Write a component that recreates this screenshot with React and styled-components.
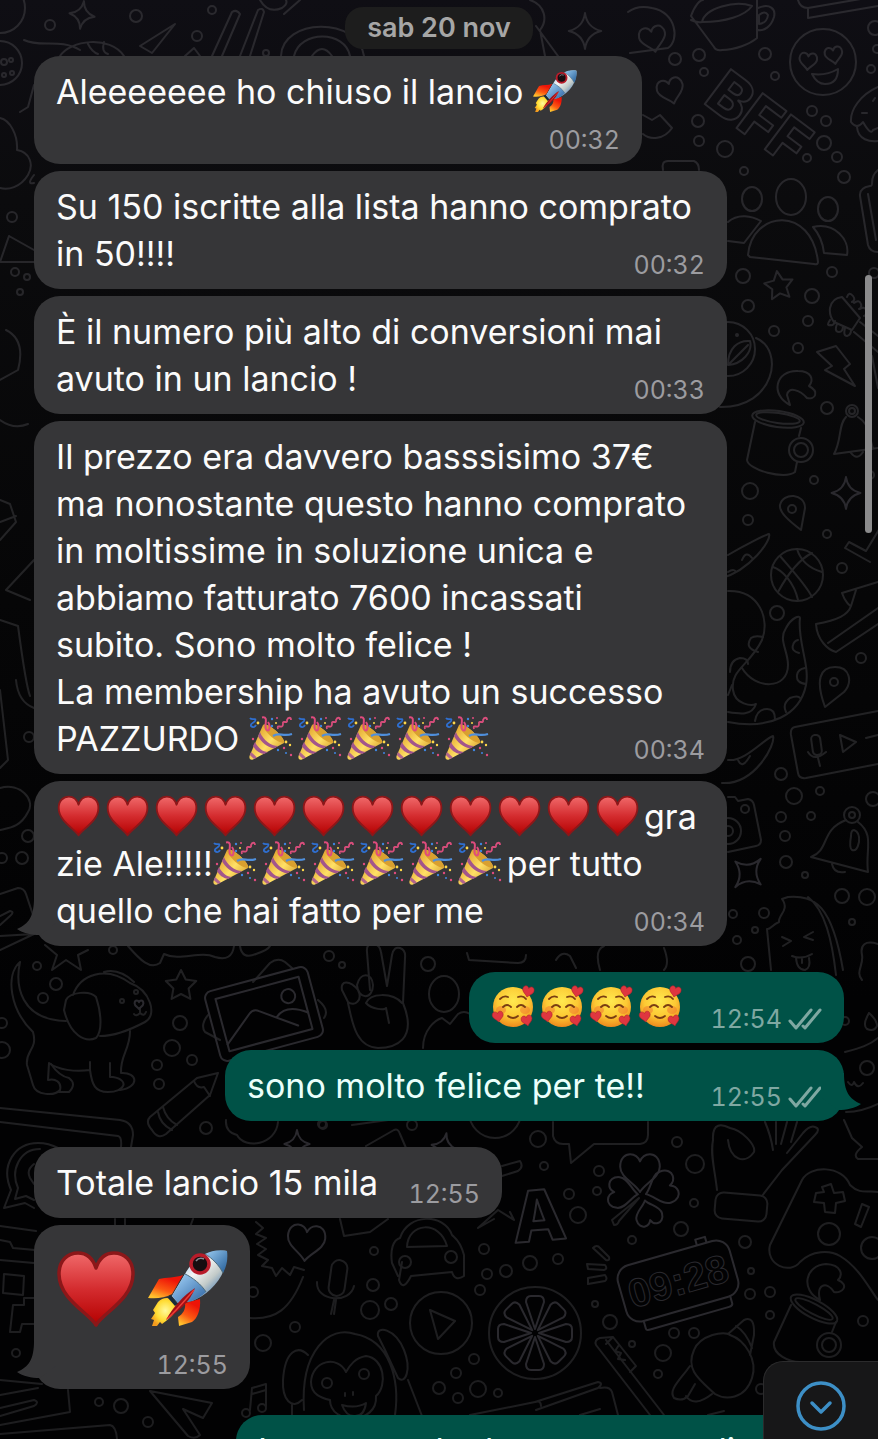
import React from 'react';
import styled, { createGlobalStyle, css } from 'styled-components';

const GlobalStyle = createGlobalStyle`
  * {
    box-sizing: border-box;
  }
  body {
    margin: 0;
    background: #020203;
    font-family: Inter, "Liberation Sans", sans-serif;
  }
`;

const Screen = styled.main`
  position: relative;
  height: 100vh;
  overflow: hidden;
  background: linear-gradient(#0f0e14 0, #0b0b0d 200px, #060607 600px, #020203 1000px);
`;

const Wallpaper = styled.svg`
  position: absolute;
  inset: 0;
  width: 100%;
  height: 100%;
  fill: none;
  stroke-width: 2;
  stroke-linecap: round;
  stroke-linejoin: round;
`;

const Thread = styled.div`
  position: relative;
  display: flex;
  flex-direction: column;
  gap: 26px;
  padding: 7px 34px 0;
`;

const DatePill = styled.time`
  align-self: center;
  height: 42px;
  margin-bottom: -19px;
  padding: 0 22px;
  border-radius: 18px;
  background: #1d1d1d;
  color: #a6a6a6;
  font-size: 27px;
  font-weight: 600;
  line-height: 42px;
`;

const Group = styled.section`
  display: flex;
  flex-direction: column;
  align-items: ${({ $mine }) => ($mine ? 'flex-end' : 'flex-start')};
  gap: 7px;
`;

const Bubble = styled.article`
  position: relative;
  display: grid;
  grid-template-columns: ${({ $time }) => ($time === 'beside' ? 'auto auto' : '1fr')};
  justify-content: space-between;
  column-gap: 16px;
  width: ${({ $width }) => ($width ? `${$width}px` : 'fit-content')};
  max-width: 100%;
  padding: 12px 22px;
  border-radius: 26px;
  background: ${({ $mine }) => ($mine ? '#005247' : '#363638')};
  color: ${({ $mine }) => ($mine ? '#eafffb' : '#fbfbfb')};
`;

const Text = styled.p`
  grid-row: 1;
  grid-column: 1;
  margin: 0;
  font-size: 34px;
  line-height: 47px;
  white-space: pre;
`;

const Line = styled.span`
  display: block;
  width: fit-content;
  height: 47px;
`;

const Meta = styled.span`
  display: flex;
  align-items: center;
  gap: 6px;
  align-self: end;
  justify-self: end;
  height: 32px;
  margin-bottom: -4px;
  color: ${({ $mine }) => ($mine ? '#7fa8a2' : '#9c9ca0')};
  font-size: 25px;
  font-variant-numeric: tabular-nums;
  line-height: 32px;
  ${({ $time }) => $time === 'over' && css`
    grid-row: 1;
    grid-column: 1;
  `}
  ${({ $time }) => $time === 'below' && css`
    margin-top: 9px;
  `}
`;

const TailShape = styled.svg`
  position: absolute;
  bottom: 0;
  width: 40px;
  height: 48px;
  fill: ${({ $mine }) => ($mine ? '#005247' : '#363638')};
  ${({ $mine }) => ($mine ? 'right: -17px; transform: scaleX(-1);' : 'left: -17px;')}
`;

const Inline = styled.svg`
  width: 44px;
  height: 44px;
  margin-right: 5px;
  vertical-align: -9px;
`;

const BigEmojis = styled.div`
  display: flex;
  gap: 12px;
  padding: 12px 0 13px;
`;

const Big = styled.svg`
  width: 80px;
  height: 78px;
`;

const ScrollThumb = styled.div`
  position: absolute;
  top: 275px;
  right: 6px;
  width: 7px;
  height: 258px;
  border-radius: 4px;
  background: #8b8b8c;
`;

const ScrollDown = styled.button`
  position: absolute;
  right: 0;
  bottom: 0;
  display: flex;
  align-items: center;
  justify-content: center;
  width: 115px;
  height: 78px;
  padding: 10px 0 0;
  border: 1px solid #2b2b2c;
  border-width: 1px 0 0 1px;
  border-radius: 20px 0 0 0;
  background: #171718;
`;

const HiddenDefs = styled.svg`
  position: absolute;
  width: 0;
  height: 0;
`;

const HEART = 'M0 10C-3 5-11 2-11-4C-11-9-8-11-5.500-11C-2.500-11-.8-9 0-7C.8-9 2.500-11 5.500-11C8-11 11-9 11-4C11 2 3 5 0 10Z';

/* ---------- emoji drawings ---------- */

const EmojiDefs = () => (
  <HiddenDefs aria-hidden="true">
    <defs>
      <linearGradient id="heartRed" x1="0" y1="0" x2="0" y2="1">
        <stop offset="0" stopColor="#f0696a" />
        <stop offset=".5" stopColor="#d42c2f" />
        <stop offset="1" stopColor="#b40000" />
      </linearGradient>
      <linearGradient id="cone" x1="0" y1=".2" x2="1" y2="1">
        <stop offset=".1" stopColor="#e0a12c" />
        <stop offset=".5" stopColor="#ffe066" />
        <stop offset="1" stopColor="#c98a1c" />
      </linearGradient>
      <radialGradient id="face" cx=".5" cy=".35" r=".65">
        <stop offset="0" stopColor="#ffe94f" />
        <stop offset=".6" stopColor="#fcc934" />
        <stop offset="1" stopColor="#ee8a1c" />
      </radialGradient>
      <linearGradient id="hull" x1="0" y1="0" x2="1" y2="1">
        <stop offset=".1" stopColor="#7db4e6" />
        <stop offset=".42" stopColor="#f4f6f5" />
        <stop offset=".62" stopColor="#c3cbc9" />
        <stop offset=".85" stopColor="#3f78b4" />
      </linearGradient>
      <linearGradient id="base" x1="0" y1="0" x2="1" y2="1">
        <stop offset=".2" stopColor="#8fc0ea" />
        <stop offset="1" stopColor="#2c62a0" />
      </linearGradient>
      <linearGradient id="nose" x1="0" y1="0" x2="1" y2="1">
        <stop offset="0" stopColor="#9ccdf2" />
        <stop offset="1" stopColor="#235c96" />
      </linearGradient>
      <linearGradient id="fin" x1=".8" y1="0" x2=".3" y2="1">
        <stop offset=".2" stopColor="#ee1408" />
        <stop offset=".65" stopColor="#fb5a12" />
        <stop offset="1" stopColor="#ffc22e" />
      </linearGradient>
      <radialGradient id="flame" cx=".55" cy=".45" r=".6">
        <stop offset="0" stopColor="#fffa9c" />
        <stop offset=".6" stopColor="#ffdc33" />
        <stop offset="1" stopColor="#f39a1d" />
      </radialGradient>
    </defs>
  </HiddenDefs>
);

const HeartArt = () => (
  <path
    d="M39 74C32 62 2 48 2 23C2 9 11 2 21 2C30 2 36 8 39 17C42 8 48 2 57 2C67 2 76 9 76 23C76 48 46 62 39 74Z"
    fill="url(#heartRed)"
    stroke="#8c1719"
    strokeWidth="3.500"
    strokeLinejoin="round"
  />
);

const RocketArt = () => (
  <>
    <path d="M0 48L11 29C18 27 28 28 35 25L24 44C17 48 8 49 0 48Z" fill="url(#fin)" />
    <path d="M37 53L52 49C53 60 49 69 44 72L31 76L30 67C35 64 38 59 37 53Z" fill="url(#fin)" />
    <path d="M4 76L6 70L3 69L7 63L5 60L10 52C15 47 22 46 29 53C30 60 25 66 18 71L14 74L12 72L9 76Z" fill="url(#flame)" />
    <path d="M79 1C60-1 44 10 37 24L24 46L30 53L44 51C62 44 80 26 79 1Z" fill="url(#hull)" />
    <path d="M37 24L24 46L30 53L44 51C49 49 54 46 58 42C54 35 44 27 37 24Z" fill="url(#base)" />
    <path d="M79 1C71-1 63 1 57 4C64 8 71 15 75 23C79 16 80 8 79 1Z" fill="url(#nose)" />
    <path d="M57 4C64 8 71 15 75 23M37 24C44 27 54 35 58 42" stroke="#4f6d7d" fill="none" />
    <circle cx="52" cy="14" r="9" fill="#160d10" stroke="#b81c2a" strokeWidth="3.500" />
    <path d="M48 11q3-4 8-2" stroke="#8a8a94" strokeWidth="1.500" fill="none" />
    <path d="M22 45L30 54L27 56L20 48Z" fill="#172b3b" />
    <path d="M47 38C36 45 24 58 18 70C30 62 42 52 47 38Z" fill="#9f0f16" />
    <path d="M46 40C38 49 28 61 19 69" stroke="#ef3d35" strokeWidth="1.500" fill="none" />
  </>
);

const Heart = () => <Inline viewBox="-3 -3 82 82" role="img" aria-label="cuore"><HeartArt /></Inline>;

const Rocket = () => <Inline viewBox="0 -2 80 80" role="img" aria-label="razzo"><RocketArt /></Inline>;

const Party = () => (
  <Inline viewBox="0 0 44 44" role="img" aria-label="festa">
    <path d="M.5 40L14 9C18 5 37 22 35 27L4 43.500C1 44.500 0 42 .5 40Z" fill="url(#cone)" />
    <path d="M14 9C18 5 37 22 35 27C28 27 15 16 14 9Z" fill="#d9a02f" />
    <path d="M11 16C14 24 22 30 29 30L25 32.500C18 31 12 26 9 20Z" fill="#a2558c" />
    <path d="M6 26C9 32 14 36 19 36L15 38C10 37 6 34 4 30Z" fill="#a2558c" />
    <path d="M2 36L8 41.500L5 43L.8 39Z" fill="#b0648d" />
    <path d="M13 1.500C20 0 15 9 17 13C20 18 22 10 19 6" stroke="#e04b7e" strokeWidth="2" fill="none" />
    <path d="M24 20C30 16 34 21 43 18" stroke="#4f8fdc" strokeWidth="2.200" fill="none" />
    <path d="M1 2C3 5 8 1 6 5C4 8 1 7 2 10C4 12 6 11 7 9" stroke="#2f6fd0" strokeWidth="1.800" fill="none" />
    <path d="M29 13C27 7 34 14 34 8C33 3 39 9 38 4C39 1 42 1 42 4" stroke="#d94e7c" strokeWidth="1.800" fill="none" />
    <g fill="#ffd84a"><circle cx="9" cy="7" r="1.400" /><circle cx="37" cy="26" r="1.400" /><circle cx="41" cy="29" r="1.200" /><circle cx="27" cy="7" r="1" /></g>
    <g fill="#e04b7e"><circle cx="35" cy="32" r="1.200" /><circle cx="42" cy="39" r="1.200" /><circle cx="4" cy="23" r="1.200" /><circle cx="28" cy="2" r="1" /></g>
    <g fill="#3f86e0"><circle cx="23" cy="3" r="1.200" /><circle cx="23" cy="10" r="1.200" /><circle cx="29" cy="34" r="1.200" /><circle cx="37" cy="37" r="1" /></g>
  </Inline>
);

const Loved = () => (
  <Inline viewBox="-1 0 44 44" role="img" aria-label="faccina innamorata">
    <circle cx="21" cy="22" r="20" fill="url(#face)" />
    <ellipse cx="9" cy="25" rx="5" ry="4" fill="#ef6a2e" opacity=".45" />
    <ellipse cx="33" cy="25" rx="5" ry="4" fill="#ef6a2e" opacity=".45" />
    <g fill="none" stroke="#7a3d12" strokeWidth="1.800" strokeLinecap="round">
      <path d="M8 14q4-4 8-2M26 12q5-2 8 2M11 22q4-4 8 0M25 22q4-4 8 0M16 31q5 4 10 0" />
    </g>
    <g fill="#df3640" stroke="#a9202b" strokeWidth="1">
      <path d={HEART} transform="translate(36 7) rotate(12) scale(.52)" />
      <path d={HEART} transform="translate(6 32) rotate(-8) scale(.5)" />
      <path d={HEART} transform="translate(35 36) rotate(-12) scale(.5)" />
    </g>
  </Inline>
);

const repeat = (Emoji, count) => Array.from({ length: count }, (_, i) => <Emoji key={i} />);

/* ---------- doodle wallpaper ---------- */

const dots = [
  [675, 59, 6], [699, 55, 6], [704, 72, 4], [765, 54, 6], [775, 76, 4], [812, 111, 5], [826, 121, 5], [824, 143, 7],
  [807, 158, 4], [837, 157, 5], [844, 177, 6], [698, 121, 6], [699, 141, 5], [725, 149, 8], [744, 171, 4], [875, 28, 7],
  [871, 69, 4], [877, 49, 4], [50, 25, 5], [136, 16, 6], [212, 10, 4], [197, 36, 5], [266, 53, 3], [12, 217, 5],
  [15, 272, 4], [27, 277, 3], [20, 292, 3], [743, 276, 7], [832, 272, 5], [812, 296, 7], [748, 306, 6], [808, 321, 5],
  [774, 331, 5], [798, 348, 5], [827, 408, 6], [814, 480, 4], [750, 491, 8], [748, 520, 5], [827, 534, 4], [842, 568, 5],
  [874, 273, 5], [870, 475, 4], [777, 613, 7], [861, 658, 5], [781, 774, 6], [794, 796, 8], [820, 791, 4], [781, 817, 5],
  [811, 816, 4], [785, 836, 5], [786, 862, 6], [805, 875, 3], [842, 896, 7], [867, 897, 8], [852, 922, 3], [873, 799, 7],
  [733, 914, 4], [764, 913, 5], [755, 930, 3], [737, 940, 4], [748, 964, 7], [37, 966, 4], [56, 984, 6], [43, 998, 5],
  [113, 950, 4], [180, 1023, 7], [172, 1048, 8], [157, 1065, 5], [192, 1060, 5], [159, 1084, 5], [206, 1128, 6],
  [329, 956, 5], [342, 965, 3], [428, 964, 7], [322, 1124, 4], [412, 1125, 5], [2, 1023, 5], [2, 1050, 8], [29, 737, 5],
  [28, 836, 6], [22, 858, 6], [2, 858, 5], [16, 1353, 4], [99, 1402, 4], [121, 1406, 7], [148, 1422, 5], [263, 1343, 8],
  [253, 1292, 5], [538, 1139, 8], [677, 1142, 5], [544, 1166, 4], [599, 1171, 5], [597, 1191, 4], [569, 1194, 5],
  [578, 1215, 8], [695, 1164, 9], [694, 1203, 4], [681, 1229, 7], [632, 1240, 4], [745, 1242, 6], [751, 1271, 3],
  [750, 1294, 5], [770, 1292, 5], [770, 1315, 4], [863, 1321, 5], [484, 1249, 5], [558, 1259, 5], [530, 1263, 7],
  [506, 1271, 6], [487, 1274, 5], [480, 1290, 5], [373, 1285, 6], [391, 1304, 6], [370, 1310, 9], [295, 1327, 5],
  [374, 1251, 4], [474, 1359, 5], [456, 1373, 5], [439, 1388, 6], [458, 1398, 5], [478, 1389, 8], [498, 1393, 4],
  [595, 1304, 3], [610, 1322, 7], [674, 1333, 5], [694, 1333, 5], [632, 1344, 3], [663, 1353, 8], [658, 1374, 4],
  [323, 1125, 4], [761, 1389, 5], [845, 1021, 4], [867, 1068, 7],
  // cookie, eyes, lenses, handles
  [0, 63, 22], [4, 62, 3], [11, 60, 2], [4, 75, 2], [12, 73, 2], [0, 8, 25], [823, 62, 33], [728, 349, 27], [737, 335, 1],
  [801, 450, 7], [801, 450, 12], [852, 411, 6], [852, 411, 3], [792, 509, 4], [797, 575, 26], [834, 682, 4], [728, 831, 13],
  [728, 831, 5], [745, 809, 4], [852, 815, 8], [852, 815, 3], [122, 1001, 2], [136, 992, 2], [405, 1262, 6], [451, 1257, 6],
  [441, 1323, 31], [535, 1333, 46], [829, 1234, 11], [872, 1248, 11], [829, 1345, 7], [829, 1345, 12], [246, 1413, 4],
  [262, 1408, 4], [327, 1383, 5], [364, 1374, 5], [495, 1112, 26],
];

const strokes = [
  // cup and bread
  'M691 16C695 5 700 0 703 0M691 16L714 47Q716 51 722 50C735 50 750 44 757 38V0M691 20C697 23 702 22 702 22C705 8 735 0 752 6C745 16 725 22 702 22M758 8C770 3 776 9 774 17C771 27 764 31 758 30M759 15q6-5 9 0q-1 8-9 9z',
  'M798 0Q800 8 808 8L878-4M808 8V18L878 6',
  'M630 53L668 48C680 40 676 12 652 8C640 5 632 9 628 12',
  'M812 74q14 2 26-5q0 15-13 15q-8 0-13-10z',
  'M878 87C860 95 850 110 851 122q6 8 12 0q8 14 10 8l5-2M857 127C858 140 870 142 878 141M862 113h5M873 101l2-3',
  'M643 115L652 120L660 115L672 128C664 140 650 140 643 134M663 170q-2-9 5-9h26q5 2 5 9',
  // top strip
  'M24 40C40 48 60 38 80 50M60 56C70 40 110 35 124 56M88 44q4 8 10 10M104 42q-3 10 4 12M175 24L140 46L152 53ZM185 56L194 48L200 56',
  'M212 56L232 12q5-3 8 2L222 56M240 56L258 10q5-3 6 2L250 56',
  'M281 56C282 18 358 16 364 56M294 56C300 30 345 30 350 56M312 56q10-14 20 0M300 0L284 14M260 0q8 14 22 8q6-4 4-8M530 0C545 5 548 20 540 30L545 56M536 26L558 56',
  // left margin
  'M0 118C10 120 18 135 17 150C30 152 34 165 28 175C20 188 8 190 0 188M20 112l8-5l6-22M34 175q-8 10 0 8M9 236L0 262H34M9 236L34 250M0 500l10 4l6 18l-16 18M0 522L16 516M0 620l18 6q8 60 12 70M0 690L8 760L0 768M16 680q2 22 18 28',
  'M0 788C20 782 36 800 28 812C20 828 8 828 0 830M0 894L18 888Q24 888 26 894L34 918M0 916l10-5q5 1 0 5L0 925M0 936L34 934L0 950M34 560L6 590L30 600M6 330q20 10 12 40L0 380M0 420q14 10 28 4',
  // people
  'M748 255C752 210 812 205 818 262Q818 265 814 264L750 257zM728 222C738 213 752 216 761 221L744 243L728 241M813 227C835 222 850 240 847 255L824 253C823 243 820 235 813 227',
  'M878 170C868 178 875 186 870 186Q859 188 860 196L868 245Q870 252 878 252M868 194L876 240',
  // guitar, bolt, duck, smoke
  'M830 308q2-10 12-11L860 318L852 330L834 322Q829 316 830 308M847 297q2-6 6-1q3 4-1 6M854 303q5-4 7 1q1 4-2 5M860 309q5-3 7 2q0 4-3 5M830 320q-4 6 0 5q4 1 5-4M837 324q-3 8 2 8q4 0 4-6M845 328q-2 8 2 8q4-1 4-6M860 322L878 336M854 332L878 352M872 356l6 32',
  'M817 352L836 346L850 364L844 369L855 386L825 370L832 366Z',
  'M756 338C785 350 775 408 720 407M728 365C728 348 738 340 750 341C753 352 742 364 728 365L748 345',
  'M790 405C770 395 775 370 798 371C812 371 814 380 809 386C820 392 815 400 807 398C800 390 788 386 787 395Z',
  // mug, bell, pin
  'M755 422L747 460C748 470 785 480 795 472L797 462M801 428L799 436M846 417C838 425 842 440 834 454L878 448M858 417q10 6 12 20l3 12M851 453q6 8 12-1',
  'M801 530C788 520 779 512 780 505C783 492 805 493 805 508ZM728 555C745 545 765 535 769 534C772 540 750 570 722 578M742 560q4-10 10-2M728 572q6-4 8 0',
  'M780 556C792 570 806 585 812 597M773 567C782 570 794 582 798 600M797 549C802 565 815 570 822 572M778 592C790 570 802 558 812 553M845 548l4-6L866 551L880 528M845 548L870 562',
  // shoe, octopus
  'M842 593L878 582M842 593C845 602 850 606 851 606C848 615 838 620 816 624C817 640 828 650 836 652L878 624M828 643L878 608M851 606L856 590',
  'M728 591C760 590 770 620 762 640C750 665 730 670 733 690C735 705 752 706 756 704C752 716 740 714 728 712M742 668C755 690 788 690 788 665C788 650 778 640 786 628C792 617 800 615 800 618C797 640 810 665 806 685C800 715 770 730 728 722',
  'M758 652q-14-4-7-14q4-3 12-1M730 672q0-12 10-14q8 0 8 6M728 695l4-10M755 721q2-12 12-12q8 0 8 10M786 712q-4-8 4-14q8-3 10 0M806 684q-10-1-9-9q1-6 8-7M799 653q-8-2-6-8q1-4 5-5',
  'M825 707C815 680 820 667 835 667C850 667 853 682 844 692ZM878 711L795 727Q790 728 791 735L798 773Q799 779 806 778L878 764M840 735L856 742L843 752ZM866 738L878 735M808 752q6 10 18 0M818 758l2 8',
  'M728 760C745 762 765 738 773 736C776 744 755 785 722 783M738 760q4 10 12-4M728 797L735 797L738 801L748 799Q753 800 754 805L761 840Q761 845 756 846L728 852',
  // second bell, lolly
  'M846 820C820 830 830 850 811 857L868 872C865 850 875 835 858 822M854 830q6 2 5 12q-2 10-7 8q-3-2-1-14q0-6 3-6M832 864q2 10 13 8',
  'M782 899L788 897C815 895 832 905 843 970M782 899C790 910 778 915 779 922C772 925 770 930 767 929L771 970M808 897C825 910 832 940 836 975M782 937l9 4l-8 5M813 932l-9 5l9 3M792 956q10 4 20-2M796 958q1 12 9 12q6-2 4-12M802 958v5',
  'M878 944C865 940 860 945 862 955C864 965 855 972 862 980M845 1052C860 1048 870 1045 878 1038M846 1112C858 1112 870 1108 878 1104M869 1013q-7 12-2 16q7 3 10-3q0-6-8-13M844 1120L852 1138L862 1147q-10 8-4 12h20M848 1082q4 6 6 0q4 8 9 1',
  // puppy
  'M20 962C5 975 10 1010 33 1032C38 1050 25 1050 27 1065L33 1085C36 1096 55 1096 60 1090C62 1082 55 1078 48 1080L49 1063C58 1070 75 1072 90 1070C92 1085 95 1092 108 1092C125 1092 130 1080 113 1077H110V1063M90 1062V1070M20 962C15 985 20 1020 66 1021',
  'M51 1064q8 12 18 14q8 6 0 14h-10M130 1031C130 1050 120 1055 121 1073C138 1072 140 1087 120 1090',
  'M66 1000C70 992 90 990 96 997C102 1015 102 1032 96 1038C85 1043 70 1035 64 1010ZM73 995C80 975 105 965 130 983C150 990 158 1015 145 1022C130 1030 115 1036 100 1036M104 972q15-4 30 10M140 1008v5q-4 4-6 1M140 1013q4 4 6-1',
  'M45 945L57 955L52 970L66 960L81 970L78 955L88 950M128 946C140 960 150 970 160 963L164 954C180 962 200 950 215 957Q232 962 234 946M240 946q2 14 16 8q12-4 14-8',
  'M253 982L270 963Q278 957 285 962L292 968M318 1000Q330 1010 324 1018M208 1015Q200 1025 205 1032L220 1040',
  // hand, person, pencil
  'M370 990L367 952Q366 943 374 944Q380 945 381 952L387 986L392 955Q394 946 400 948Q406 950 405 958L403 1003C418 1040 395 1048 378 1048C355 1047 352 1020 348 1003M342 990C340 980 350 980 358 990C363 1000 355 1007 348 1002ZM357 985C360 972 372 972 373 985C373 1000 358 1000 357 985M366 1003C370 993 392 992 402 1003M366 1003C372 1010 385 1010 386 1008L389 1023',
  'M423 1048C423 1030 435 1020 442 1018L450 1024L458 1014q6-4 12 0M218 1073L197 1078L150 1117Q145 1122 152 1130Q158 1140 166 1134L210 1095ZM158 1112q2 12 14 18M163 1107q3 12 14 18M194 1081q3 8 10 6l6 9',
  'M226 1120Q225 1132 237 1135C245 1150 276 1145 278 1122M352 1125l36-5M366 1146L394 1130Q398 1128 400 1134L406 1148M467 953L469 960L518 963q8 0 8-8M556 960q6-10 14-4l6 12M600 970q-6-20 4-24M664 948q6 16 0 22',
  // phone and speech mark
  'M0 1108L120 1120Q133 1122 133 1135L131 1147M0 1122L118 1136Q122 1137 121 1147M34 1208L25 1203L4 1208L11 1190C0 1165 15 1143 38 1143C50 1143 56 1147 60 1149M34 1200L26 1196L15 1199L18 1188C10 1170 20 1149 40 1149M34 1164q-8 6-4 14l4 6',
  'M0 1226L36 1231M0 1240l10 2l3 6l22 2M0 1260L34 1263M4 1274l20 2l-1 19l-20-2zM34 1298H24V1305H13L10 1332H20L22 1324H34M115 1219v8M125 1219v8M193 1219l-3 8',
  'M0 1380L42 1384M0 1395L38 1388M0 1408L34 1400q6 2 0 6L0 1416M68 1390L70 1412L0 1425M0 1434L110 1425Q116 1426 117 1439M150 1391L212 1403L203 1418L183 1409L200 1435Q195 1440 188 1436ZM250 1410L252 1388L266 1384V1406M252 1394L266 1390',
  // dinosaur and monkey
  'M256 1222l7 6l-7 6l10 4l-9 6l9 5l-8 6l10 5l-6 6l10 2l4 8l6-8l8 7l4-8l10 3M303 1277C290 1310 275 1320 250 1318',
  'M304 1410C300 1350 330 1325 355 1334C390 1340 400 1380 395 1415M308 1355C298 1345 285 1350 283 1380C282 1400 292 1410 302 1400M378 1336C376 1325 395 1328 404 1350C412 1370 405 1385 398 1378L385 1350ZM346 1372C338 1355 312 1360 311 1382C311 1395 322 1398 330 1400C330 1425 378 1425 376 1396C388 1385 384 1358 366 1356C355 1358 350 1365 346 1372M342 1405q14 4 24-2q-2 14-12 13q-8 0-12-11M345 1393v3M353 1392v3M292 1405v12M408 1380l14 36',
  // car, play, mic
  'M402 1262L399 1280q4 12 12-4L452 1272q3 10 12 4L464 1255C460 1240 455 1238 452 1235C444 1213 408 1213 400 1238C393 1240 390 1250 392 1263L398 1276M407 1247C408 1222 440 1220 447 1246ZM430 1310L455 1321L438 1339Z',
  'M317 1282C316 1302 350 1304 354 1286M334 1300L331 1314M336 1300L334 1314M340 1219L344 1236L370 1232L388 1219',
  'M502 1166L520 1161q4 6-2 10L502 1176M494 1219L478 1228L498 1210L514 1220L510 1212',
  // speech bubble, hand with brush, gamepad
  'M553 1122V1136q2 8 10 8H569L571 1163L594 1144H640Q648 1143 648 1135V1122M717 1190C715 1170 710 1155 713 1140C712 1122 722 1124 730 1128C742 1130 756 1145 754 1152C745 1165 730 1160 728 1140M762 1196L782 1170L815 1135q6-6 0-8q-5-2-12 6L787 1153M765 1122q6 14 8 28M776 1122q0 10 0 22M787 1122l-6 22M797 1122l-6 20',
  'M770 1245L802 1180C810 1165 842 1165 850 1185C860 1195 868 1190 878 1192M770 1245C765 1265 790 1275 800 1262C812 1250 830 1250 840 1256C860 1268 870 1290 878 1300M822 1187l9-3l3 9l9-1l2 9l-9 2l-1 10l-10-1l-1-9l-10-1l2-9l8-1zM862 1204l7 3l-8 20l-6-3z',
  // kettle mug, turnip, toothbrush, book
  'M791 1305L774 1342C772 1355 790 1362 800 1362M836 1322L832 1332M820 1300C800 1290 805 1265 826 1264C842 1265 843 1275 838 1280C850 1285 842 1294 834 1292C826 1280 816 1285 820 1300',
  'M694 1350C700 1335 725 1330 730 1335C745 1340 758 1360 752 1378C745 1400 725 1400 715 1394C700 1380 685 1370 694 1350M728 1334L744 1320Q755 1315 754 1335L750 1355M736 1326q10 6 16 22M690 1366C680 1380 668 1390 674 1398q8 4 14-2L695 1384M686 1396q8 12 26-2',
  'M596 1345L650 1415M606 1340L664 1415M596 1345Q594 1340 600 1338L613 1337L636 1366L630 1372M613 1337L606 1344M619 1345l-4 6l6 2l-3 6l7 1',
  'M470 1415L535 1402L598 1382q6 1 0 6L536 1410M600 1388Q610 1386 612 1392L618 1415M535 1402q6-2 6 4M580 1415l20-6M708 1415l16-4',
];

const Star = ({ x, y, r, turn = 0 }) => {
  const points = Array.from({ length: 10 }, (_, i) => {
    const a = ((i * 36 + turn - 90) * Math.PI) / 180;
    const d = i % 2 ? r / 2 : r;
    return `${x + d * Math.cos(a)},${y + d * Math.sin(a)}`;
  });
  return <polygon points={points.join(' ')} />;
};

const Sparkle = ({ x, y, r, turn = 0 }) => (
  <path
    d="M0-10Q1-2 9 0Q1 2 0 10Q-1 2-9 0Q-1-2 0-10Z"
    vectorEffect="non-scaling-stroke"
    transform={`translate(${x} ${y}) rotate(${turn}) scale(${r / 10})`}
  />
);

const HeartLine = ({ x, y, s, turn = 0 }) => (
  <path d={HEART} vectorEffect="non-scaling-stroke" transform={`translate(${x} ${y}) rotate(${turn}) scale(${s})`} />
);

const Doodles = () => (
  <Wallpaper viewBox="0 0 878 1439" preserveAspectRatio="xMidYMin slice" aria-hidden="true">
    <defs>
      <linearGradient id="ink" gradientUnits="userSpaceOnUse" x1="0" y1="0" x2="0" y2="1439">
        <stop offset="0" stopColor="#2a292e" />
        <stop offset=".4" stopColor="#232325" />
        <stop offset="1" stopColor="#1d1d1f" />
      </linearGradient>
    </defs>
    <g stroke="url(#ink)">
      {dots.map(([x, y, r], i) => <circle key={i} cx={x} cy={y} r={r} />)}
      {strokes.map((d, i) => <path key={i} d={d} />)}
      <ellipse cx="791" cy="197" rx="15" ry="18" />
      <ellipse cx="752" cy="199" rx="10" ry="12" />
      <ellipse cx="828" cy="209" rx="10" ry="12" />
      <ellipse cx="444" cy="994" rx="15" ry="18" />
      <ellipse cx="778" cy="419" rx="26" ry="8" transform="rotate(8 778 419)" />
      <ellipse cx="778" cy="418" rx="22" ry="5" transform="rotate(8 778 418)" />
      <ellipse cx="814" cy="1309" rx="26" ry="9" transform="rotate(28 814 1309)" />
      <ellipse cx="814" cy="1309" rx="21" ry="5" transform="rotate(28 814 1309)" />
      <rect x="812" y="735" width="9" height="20" rx="4" transform="rotate(-8 816 745)" />
      <rect x="330" y="1260" width="16" height="36" rx="8" transform="rotate(8 338 1278)" />
      <rect x="715" y="1194" width="52" height="26" rx="8" transform="rotate(5 741 1207)" />
      <Star x={779} y={286} r={15} turn={-8} />
      <Star x={181} y={986} r={16} />
      <Sparkle x={82} y={15} r={14} turn={8} />
      <Sparkle x={585} y={31} r={18} />
      <Sparkle x={846} y={493} r={16} />
      <Sparkle x={748} y={873} r={19} turn={42} />
      <Sparkle x={297} y={1144} r={14} />
      <Sparkle x={444} y={1147} r={14} turn={10} />
      <HeartLine x={653} y={40} s={1.2} turn={-12} />
      <HeartLine x={671} y={92} s={1.2} turn={-15} />
      <HeartLine x={808} y={62} s={0.8} turn={5} />
      <HeartLine x={834} y={56} s={0.8} turn={-10} />
      <HeartLine x={139} y={1005} s={0.4} />
      <HeartLine x={306} y={1244} s={1.7} turn={5} />
      {/* clover */}
      <HeartLine x={640} y={1174} s={1.8} />
      <HeartLine x={624} y={1193} s={1.4} turn={-85} />
      <HeartLine x={660} y={1189} s={1.5} turn={70} />
      <HeartLine x={648} y={1212} s={1.2} turn={165} />
      <path d="M639 1198L612 1220l2 5q4 0 5-4Z" />
      {/* photo frame */}
      <g transform="translate(264 1014) rotate(-15)">
        <rect x="-53" y="-36" width="106" height="72" rx="7" />
        <rect x="-43" y="-27" width="86" height="54" />
        <circle cx="28" cy="-11" r="7" />
        <path d="M-43 20L-14-4Q-9-8-4-4L30 20M12 6Q24-4 43 10" />
      </g>
      {/* citrus slice */}
      <g transform="translate(535 1333)">
        {[0, 45, 90, 135, 180, 225, 270, 315].map((a) => (
          <path key={a} d="M0-4L-9-31Q-9-37-4-37H4Q9-37 9-31Z" transform={`rotate(${a})`} />
        ))}
      </g>
      {/* alarm clock */}
      <g transform="translate(678 1281) rotate(-16)">
        <rect x="-58" y="-29" width="116" height="58" rx="14" />
        <path d="M-44 30v7q0 2 4 2H42q4 0 4-3v-7M28-30v-5h10v5" />
        <text x="0" y="14" textAnchor="middle" fontFamily="Liberation Sans, sans-serif" fontSize="40" fontWeight="700" strokeWidth="1">09:28</text>
      </g>
      <path d="M593 1248q4-4 7 0l9 9q1 4-3 3zM587 1264l18 1q3 4-1 5l-16-1zM588 1278l17-3q3 4 0 6l-17 3z" />
      <g fontWeight="800" fontFamily="Inter, sans-serif">
        <text transform="translate(702 102) rotate(37)" fontSize="60">BFF</text>
        <text transform="translate(514 1243) rotate(-5)" fontSize="70">A</text>
      </g>
    </g>
  </Wallpaper>
);

/* ---------- messages ---------- */

const Tail = ({ mine }) => (
  <TailShape $mine={mine} viewBox="0 0 40 48" aria-hidden="true">
    <path d="M17 0C17 18 12 26 0 31C6 35 14 37 23 37L40 24V0Z" />
  </TailShape>
);

const Ticks = () => (
  <svg width="34" height="24" viewBox="0 0 34 24" fill="none" stroke="currentColor" strokeWidth="3" strokeLinecap="round" strokeLinejoin="round" role="img" aria-label="consegnato">
    <path d="M2 14L8 21L23 3M15 19L17 21L32 3" />
  </svg>
);

// time: "over" shares the last text line, "beside" gets its own column, "below" its own row
const Message = ({ at, mine = false, time = 'over', width, tail, lines, children }) => (
  <Bubble $mine={mine} $time={time} $width={width}>
    {tail && <Tail mine={mine} />}
    {lines && <Text>{lines.map((line, i) => <Line key={i}>{line}</Line>)}</Text>}
    {children}
    {at && (
      <Meta $mine={mine} $time={time}>
        <time>{at}</time>
        {mine && <Ticks />}
      </Meta>
    )}
  </Bubble>
);

const App = () => (
  <Screen>
    <GlobalStyle />
    <EmojiDefs />
    <Doodles />
    <Thread>
      <DatePill>sab 20 nov</DatePill>
      <Group>
        <Message at="00:32" time="below" width={608} lines={[<>Aleeeeeee ho chiuso il lancio <Rocket /></>]} />
        <Message at="00:32" width={693} lines={['Su 150 iscritte alla lista hanno comprato', 'in 50!!!!']} />
        <Message at="00:33" width={693} lines={['È il numero più alto di conversioni mai', 'avuto in un lancio !']} />
        <Message
          at="00:34"
          width={693}
          lines={[
            'Il prezzo era davvero basssisimo 37€',
            'ma nonostante questo hanno comprato',
            'in moltissime in soluzione unica e',
            'abbiamo fatturato 7600 incassati',
            'subito. Sono molto felice !',
            'La membership ha avuto un successo',
            <>PAZZURDO {repeat(Party, 5)}</>,
          ]}
        />
        <Message
          at="00:34"
          width={693}
          tail
          lines={[
            <>{repeat(Heart, 12)}gra</>,
            <>zie Ale!!!!!{repeat(Party, 6)}per tutto</>,
            'quello che hai fatto per me',
          ]}
        />
      </Group>
      <Group $mine>
        <Message at="12:54" time="beside" width={375} mine lines={[repeat(Loved, 4)]} />
        <Message at="12:55" time="beside" width={619} mine tail lines={['sono molto felice per te!!']} />
      </Group>
      <Group>
        <Message at="12:55" time="beside" width={468} lines={['Totale lancio 15 mila']} />
        <Message at="12:55" time="below" tail>
          <BigEmojis>
            <Big viewBox="-1 -2 80 78" role="img" aria-label="cuore"><HeartArt /></Big>
            <Big viewBox="0 -1 80 78" role="img" aria-label="razzo"><RocketArt /></Big>
          </BigEmojis>
        </Message>
      </Group>
      <Group $mine>
        <Message width={608} mine lines={['Io sono molto ben contenta di te']} />
      </Group>
    </Thread>
    <ScrollThumb />
    <ScrollDown type="button" aria-label="Vai in fondo">
      <svg width="52" height="52" viewBox="0 0 52 52" fill="none" stroke="#3d8fc6" strokeWidth="3.500" strokeLinecap="round" strokeLinejoin="round">
        <circle cx="26" cy="26" r="23" />
        <path d="M17 23L26 32L35 23" />
      </svg>
    </ScrollDown>
  </Screen>
);

export default App;
